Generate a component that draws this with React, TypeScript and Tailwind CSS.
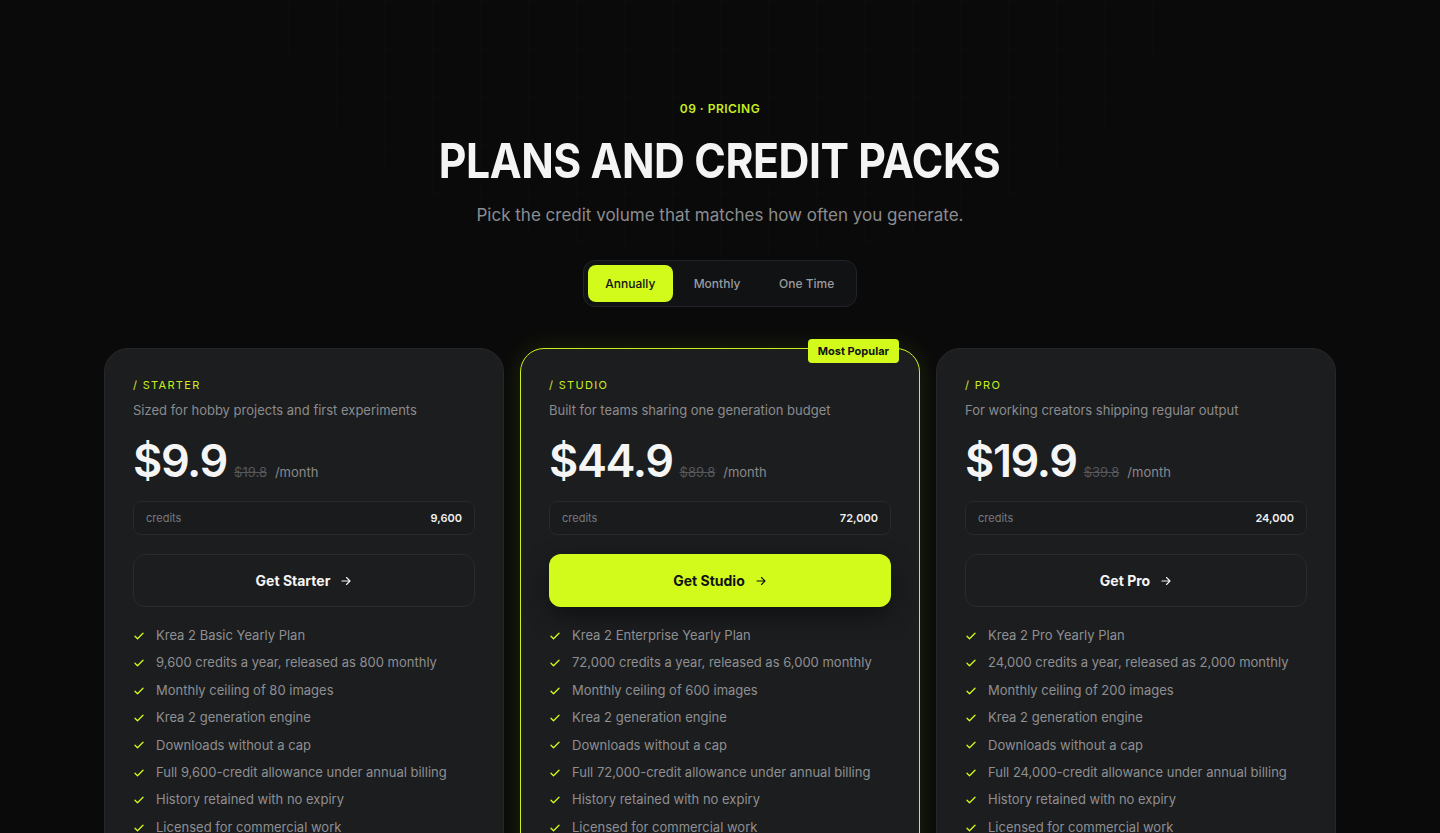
import React from "react";

const LIME = "#d2fb1c";

type Plan = {
  key: string;
  label: string;
  desc: string;
  price: string;
  old: string;
  credits: string;
  cta: string;
  featured?: boolean;
  features: string[];
};

const plans: Plan[] = [
  {
    key: "starter",
    label: "/ STARTER",
    desc: "Sized for hobby projects and first experiments",
    price: "$9.9",
    old: "$19.8",
    credits: "9,600",
    cta: "Get Starter",
    features: [
      "Krea 2 Basic Yearly Plan",
      "9,600 credits a year, released as 800 monthly",
      "Monthly ceiling of 80 images",
      "Krea 2 generation engine",
      "Downloads without a cap",
      "Full 9,600-credit allowance under annual billing",
      "History retained with no expiry",
      "Licensed for commercial work",
    ],
  },
  {
    key: "studio",
    label: "/ STUDIO",
    desc: "Built for teams sharing one generation budget",
    price: "$44.9",
    old: "$89.8",
    credits: "72,000",
    cta: "Get Studio",
    featured: true,
    features: [
      "Krea 2 Enterprise Yearly Plan",
      "72,000 credits a year, released as 6,000 monthly",
      "Monthly ceiling of 600 images",
      "Krea 2 generation engine",
      "Downloads without a cap",
      "Full 72,000-credit allowance under annual billing",
      "History retained with no expiry",
      "Licensed for commercial work",
    ],
  },
  {
    key: "pro",
    label: "/ PRO",
    desc: "For working creators shipping regular output",
    price: "$19.9",
    old: "$39.8",
    credits: "24,000",
    cta: "Get Pro",
    features: [
      "Krea 2 Pro Yearly Plan",
      "24,000 credits a year, released as 2,000 monthly",
      "Monthly ceiling of 200 images",
      "Krea 2 generation engine",
      "Downloads without a cap",
      "Full 24,000-credit allowance under annual billing",
      "History retained with no expiry",
      "Licensed for commercial work",
    ],
  },
];

function Check() {
  return (
    <svg width="12" height="12" viewBox="0 0 24 24" fill="none" stroke={LIME} strokeWidth="2.6" strokeLinecap="round" strokeLinejoin="round">
      <path d="M4 12.5l5 5L20 6.5" />
    </svg>
  );
}

function Arrow({ color }: { color: string }) {
  return (
    <svg width="12" height="12" viewBox="0 0 24 24" fill="none" stroke={color} strokeWidth="2.2" strokeLinecap="round" strokeLinejoin="round">
      <path d="M4 12h16M13 5l7 7-7 7" />
    </svg>
  );
}

function Card({ p }: { p: Plan }) {
  return (
    <div
      className={
        "relative w-[400px] h-[520px] rounded-[24px] bg-[#1c1d1f] px-[28px] pt-[28px] " +
        (p.featured
          ? "border-[1.5px] border-[#c9f01e] shadow-[0_0_24px_rgba(200,240,30,0.12)]"
          : "border border-[#26272a]")
      }
    >
      {p.featured && (
        <div className="absolute right-[20px] top-[-10px] h-[24px] px-[10px] rounded-[4px] bg-[#d2fb1c] flex items-center text-[11px] font-bold text-[#111] font-['Inter',sans-serif]">
          Most Popular
        </div>
      )}
      <div className="text-[11px] leading-[16px] tracking-[0.12em] text-[#c8ee1f] font-normal">{p.label}</div>
      <div className="mt-[7px] text-[13px] leading-[20px] text-[#8b8c8e]">{p.desc}</div>
      <div className="mt-[17px] flex items-baseline">
        <span className="text-[45px] leading-[48px] font-semibold tracking-[-0.03em] text-[#f5f5f5]">{p.price}</span>
        <span className="ml-[7px] text-[13px] text-[#55575a] line-through">{p.old}</span>
        <span className="ml-[8px] text-[13px] text-[#88898c]">/month</span>
      </div>
      <div className="mt-[16px] h-[34px] rounded-[8px] border border-[#28292c] bg-[#1a1b1d] flex items-center justify-between px-[12px]">
        <span className="text-[11px] text-[#77797c]">credits</span>
        <span className="text-[11px] font-semibold text-[#f0f0f0]">{p.credits}</span>
      </div>
      <button
        className={
          "mt-[19px] w-full h-[53px] rounded-[12px] flex items-center justify-center gap-[10px] text-[14px] font-bold " +
          (p.featured
            ? "bg-[#d2fb1c] text-[#111] shadow-[0_8px_24px_rgba(0,0,0,0.45)]"
            : "bg-[#1c1d1f] border border-[#2a2b2e] text-[#f5f5f5]")
        }
      >
        <span>{p.cta}</span>
        <Arrow color={p.featured ? "#111" : "#f5f5f5"} />
      </button>
      <ul className="mt-[20px] flex flex-col gap-[10px]">
        {p.features.map((f) => (
          <li key={f} className="flex items-center gap-[11px] text-[13px] leading-[17.4px] text-[#8e8f92]">
            <Check />
            <span>{f}</span>
          </li>
        ))}
      </ul>
    </div>
  );
}

export default function App() {
  return (
    <div className="relative w-full h-[833px] overflow-hidden bg-[#0a0a0a] font-['Inter',sans-serif]">
      <div
        className="absolute inset-x-0 top-0 h-[420px] pointer-events-none opacity-60"
        style={{
          backgroundImage:
            "linear-gradient(to right, rgba(255,255,255,0.018) 1px, transparent 1px), linear-gradient(to bottom, rgba(255,255,255,0.018) 1px, transparent 1px)",
          backgroundSize: "48px 48px",
          maskImage: "radial-gradient(ellipse at 50% 0%, black 30%, transparent 75%)",
          WebkitMaskImage: "radial-gradient(ellipse at 50% 0%, black 30%, transparent 75%)",
        }}
      />
      <div className="relative flex flex-col items-center pt-[101px]">
        <div className="text-[12px] leading-[16px] font-semibold tracking-[0.04em] text-[#c8ee1f]">09 · PRICING</div>
        <h1 className="mt-[19px] text-[48px] leading-[50px] font-bold text-[#f4f4f4] font-['Inter',sans-serif] tracking-[-0.01em] scale-x-[0.89]">
          PLANS AND CREDIT PACKS
        </h1>
        <p className="mt-[17px] text-[17px] leading-[24px] text-[#8c8d90]">
          Pick the credit volume that matches how often you generate.
        </p>
        <div className="mt-[33px] h-[47px] w-[274px] rounded-[12px] border border-[#222326] bg-[#111214] flex items-center p-[4px] gap-[4px]">
          <div className="h-[37px] w-[86px] rounded-[8px] bg-[#d2fb1c] flex items-center justify-center text-[12px] font-medium text-[#111]">
            Annually
          </div>
          <div className="h-[37px] w-[82px] flex items-center justify-center text-[12px] font-medium text-[#9a9b9e]">
            Monthly
          </div>
          <div className="h-[37px] w-[92px] flex items-center justify-center text-[12px] font-medium text-[#9a9b9e]">
            One Time
          </div>
        </div>
        <div className="mt-[41px] flex gap-[16px] items-start">
          {plans.map((p) => (
            <Card key={p.key} p={p} />
          ))}
        </div>
      </div>
    </div>
  );
}
